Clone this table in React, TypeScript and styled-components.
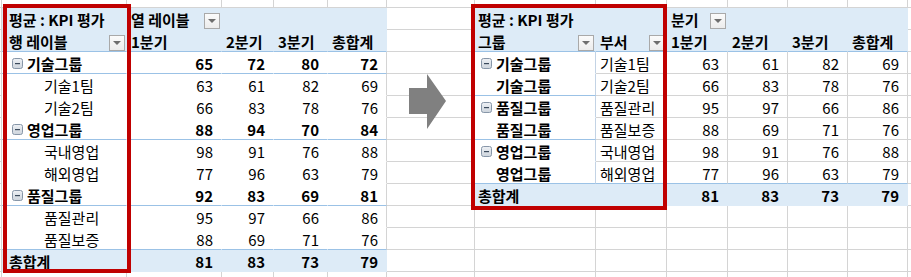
import React from 'react';
import styled, { createGlobalStyle } from 'styled-components';

const GRID = '#d4d4d4';
const HEAD = '#ddebf7';
const RULE = '#9bc2e6';
const DIVIDER = '#c3d3e5';
const RED = '#c00000';

const COLS = [2, 125, 95, 52, 54, 59, 88, 121, 71, 61, 60, 60, 60, 40];
const QUARTERS = ['1분기', '2분기', '3분기', '총합계'];

const GlobalStyle = createGlobalStyle`
  html, body {
    margin: 0;
    padding: 0;
    background: #fff;
    overflow: hidden;
  }
  body {
    font-family: 'Noto Sans CJK KR', 'Noto Sans', sans-serif;
    color: #000;
  }
`;

const Sheet = styled.div`
  position: relative;
  display: grid;
  grid-template-columns: ${COLS.map(w => `${w}px`).join(' ')};
  grid-template-rows: 8px repeat(12, 22px) 22px;
  width: 911px;
  height: 277px;
  overflow: hidden;
`;

interface CellProps {
  $fill?: string;
  $r?: string;
  $b?: string;
  $align?: 'left' | 'right';
  $bold?: boolean;
  $pl?: number;
  $pr?: number;
}

const Cell = styled.div<CellProps>`
  box-sizing: border-box;
  display: flex;
  align-items: center;
  justify-content: ${p => (p.$align === 'right' ? 'flex-end' : 'flex-start')};
  gap: 4px;
  min-width: 0;
  background: ${p => p.$fill ?? '#fff'};
  border-right: 1px solid ${p => p.$r ?? GRID};
  border-bottom: 1px solid ${p => p.$b ?? GRID};
  padding: 0 ${p => p.$pr ?? 0}px 0 ${p => p.$pl ?? 0}px;
  font-size: 15px;
  line-height: 1;
  font-weight: ${p => (p.$bold ? 700 : 400)};
  white-space: nowrap;
`;

const Label = styled.span<{ $grow?: boolean }>`
  flex: ${p => (p.$grow ? 1 : '0 0 auto')};
  padding-top: 2px;
`;

const DropBox = styled.span`
  box-sizing: border-box;
  align-self: flex-end;
  flex: 0 0 auto;
  width: 16px;
  height: 16px;
  border: 1px solid #a9a9a9;
  background: linear-gradient(#fbfbfb, #ececec);
  display: flex;
  align-items: center;
  justify-content: center;
`;

const Caret = styled.span`
  width: 0;
  height: 0;
  margin-top: -1px;
  border-left: 4px solid transparent;
  border-right: 4px solid transparent;
  border-top: 4px solid #6e6e6e;
`;

const DropButton = () => (
  <DropBox>
    <Caret />
  </DropBox>
);

const MinusBox = () => (
  <svg width="11" height="11" viewBox="0 0 11 11" style={{ flex: '0 0 auto', marginTop: 1 }}>
    <defs>
      <linearGradient id="mb" x1="0" y1="0" x2="0" y2="1">
        <stop offset="0" stopColor="#eef1f5" />
        <stop offset="1" stopColor="#cdd4dc" />
      </linearGradient>
    </defs>
    <rect x="0.5" y="0.5" width="10" height="10" rx="2" fill="url(#mb)" stroke="#8796a8" />
    <rect x="3" y="5" width="5" height="1.2" fill="#3b4a5c" />
  </svg>
);

const Frame = styled.div<{ $x: number; $y: number; $w: number; $h: number }>`
  position: absolute;
  left: ${p => p.$x}px;
  top: ${p => p.$y}px;
  width: ${p => p.$w}px;
  height: ${p => p.$h}px;
  box-sizing: border-box;
  border: 4px solid ${RED};
  pointer-events: none;
`;

const ArrowShape = styled.svg`
  position: absolute;
  left: 409px;
  top: 74px;
`;

type Spec = {
  fill?: string;
  r?: string;
  b?: string;
  align?: 'left' | 'right';
  bold?: boolean;
  pl?: number;
  pr?: number;
  text?: string;
  minus?: boolean;
  drop?: boolean;
};

type LeftRow = { group: boolean; label: string; vals: number[] };

const leftRows: LeftRow[] = [
  { group: true, label: '기술그룹', vals: [65, 72, 80, 72] },
  { group: false, label: '기술1팀', vals: [63, 61, 82, 69] },
  { group: false, label: '기술2팀', vals: [66, 83, 78, 76] },
  { group: true, label: '영업그룹', vals: [88, 94, 70, 84] },
  { group: false, label: '국내영업', vals: [98, 91, 76, 88] },
  { group: false, label: '해외영업', vals: [77, 96, 63, 79] },
  { group: true, label: '품질그룹', vals: [92, 83, 69, 81] },
  { group: false, label: '품질관리', vals: [95, 97, 66, 86] },
  { group: false, label: '품질보증', vals: [88, 69, 71, 76] },
];

type RightRow = { group: string; first: boolean; dept: string; vals: number[] };

const rightRows: RightRow[] = [
  { group: '기술그룹', first: true, dept: '기술1팀', vals: [63, 61, 82, 69] },
  { group: '기술그룹', first: false, dept: '기술2팀', vals: [66, 83, 78, 76] },
  { group: '품질그룹', first: true, dept: '품질관리', vals: [95, 97, 66, 86] },
  { group: '품질그룹', first: false, dept: '품질보증', vals: [88, 69, 71, 76] },
  { group: '영업그룹', first: true, dept: '국내영업', vals: [98, 91, 76, 88] },
  { group: '영업그룹', first: false, dept: '해외영업', vals: [77, 96, 63, 79] },
];

const totals = [81, 83, 73, 79];

function leftSpec(r: number, c: number): Spec {
  const k = c - 1;
  const head = r <= 2 || r === 12;
  const fill = head ? HEAD : '#fff';
  const right = c === 5 && !head ? GRID : fill;
  let b = fill;
  if (r === 2 || r === 11) b = RULE;
  else if (r >= 3 && r <= 11 && leftRows[r - 3].group) b = RULE;
  const base: Spec = { fill, r: right, b };

  if (r === 1) {
    if (k === 0) return { ...base, text: '평균 : KPI 평가', bold: true, pl: 7 };
    if (k === 1) return { ...base, text: '열 레이블', bold: true, pl: 4, pr: 1, drop: true };
    return base;
  }
  if (r === 2) {
    if (k === 0) return { ...base, text: '행 레이블', bold: true, pl: 7, pr: 1, drop: true };
    return { ...base, text: QUARTERS[k - 1], bold: true, pl: 4 };
  }
  if (r === 12) {
    if (k === 0) return { ...base, text: '총합계', bold: true, pl: 7 };
    return { ...base, text: String(totals[k - 1]), bold: true, align: 'right', pr: 8 };
  }
  const row = leftRows[r - 3];
  if (k === 0) {
    return row.group
      ? { ...base, minus: true, text: row.label, bold: true, pl: 10 }
      : { ...base, text: row.label, pl: 42 };
  }
  return { ...base, text: String(row.vals[k - 1]), bold: row.group, align: 'right', pr: 8 };
}

function rightSpec(r: number, c: number): Spec {
  const k = c - 7;
  if (r <= 2 || r === 9) {
    const base: Spec = { fill: HEAD, r: HEAD, b: r === 2 ? RULE : HEAD };
    if (r === 1) {
      if (k === 0) return { ...base, text: '평균 : KPI 평가', bold: true, pl: 3 };
      if (k === 2) return { ...base, text: '분기', bold: true, pl: 4, pr: 1, drop: true };
      return base;
    }
    if (r === 2) {
      if (k === 0) return { ...base, text: '그룹', bold: true, pl: 3, pr: 1, drop: true };
      if (k === 1) return { ...base, text: '부서', bold: true, pl: 4, pr: 1, drop: true };
      return { ...base, text: QUARTERS[k - 2], bold: true, pl: 4 };
    }
    if (k === 0) return { ...base, text: '총합계', bold: true, pl: 3 };
    if (k === 1) return base;
    return { ...base, text: String(totals[k - 2]), bold: true, align: 'right', pr: 8 };
  }
  const i = r - 3;
  const row = rightRows[i];
  if (k === 0) {
    return {
      fill: '#fff',
      r: DIVIDER,
      b: !row.first ? RULE : '#fff',
      text: row.group,
      bold: true,
      minus: row.first,
      pl: row.first ? 6 : 21,
    };
  }
  const b = r === 8 ? RULE : GRID;
  if (k === 1) return { r: GRID, b, text: row.dept, pl: 4 };
  return { r: GRID, b, text: String(row.vals[k - 2]), align: 'right', pr: 8 };
}

function specAt(r: number, c: number): Spec {
  if (r >= 1 && r <= 12 && c >= 1 && c <= 5) return leftSpec(r, c);
  if (r >= 1 && r <= 9 && c >= 7 && c <= 12) return rightSpec(r, c);
  return {};
}

const ROWS = 14;

const App: React.FC = () => {
  const cells: React.ReactNode[] = [];
  for (let r = 0; r < ROWS; r++) {
    for (let c = 0; c < COLS.length; c++) {
      const s = specAt(r, c);
      cells.push(
        <Cell
          key={`${r}-${c}`}
          $fill={s.fill}
          $r={s.r}
          $b={s.b}
          $align={s.align}
          $bold={s.bold}
          $pl={s.pl}
          $pr={s.pr}
        >
          {s.minus && <MinusBox />}
          {s.text && <Label $grow={s.drop}>{s.text}</Label>}
          {s.drop && <DropButton />}
        </Cell>
      );
    }
  }

  return (
    <>
      <GlobalStyle />
      <Sheet>
        {cells}
        <ArrowShape width="38" height="56" viewBox="0 0 38 56">
          <polygon points="0,14 18,14 18,0 37,27 18,55 18,40 0,40" fill="#808080" />
        </ArrowShape>
        <Frame $x={3} $y={4} $w={128} $h={269} />
        <Frame $x={471} $y={4} $w={196} $h={206} />
      </Sheet>
    </>
  );
};

export default App;
